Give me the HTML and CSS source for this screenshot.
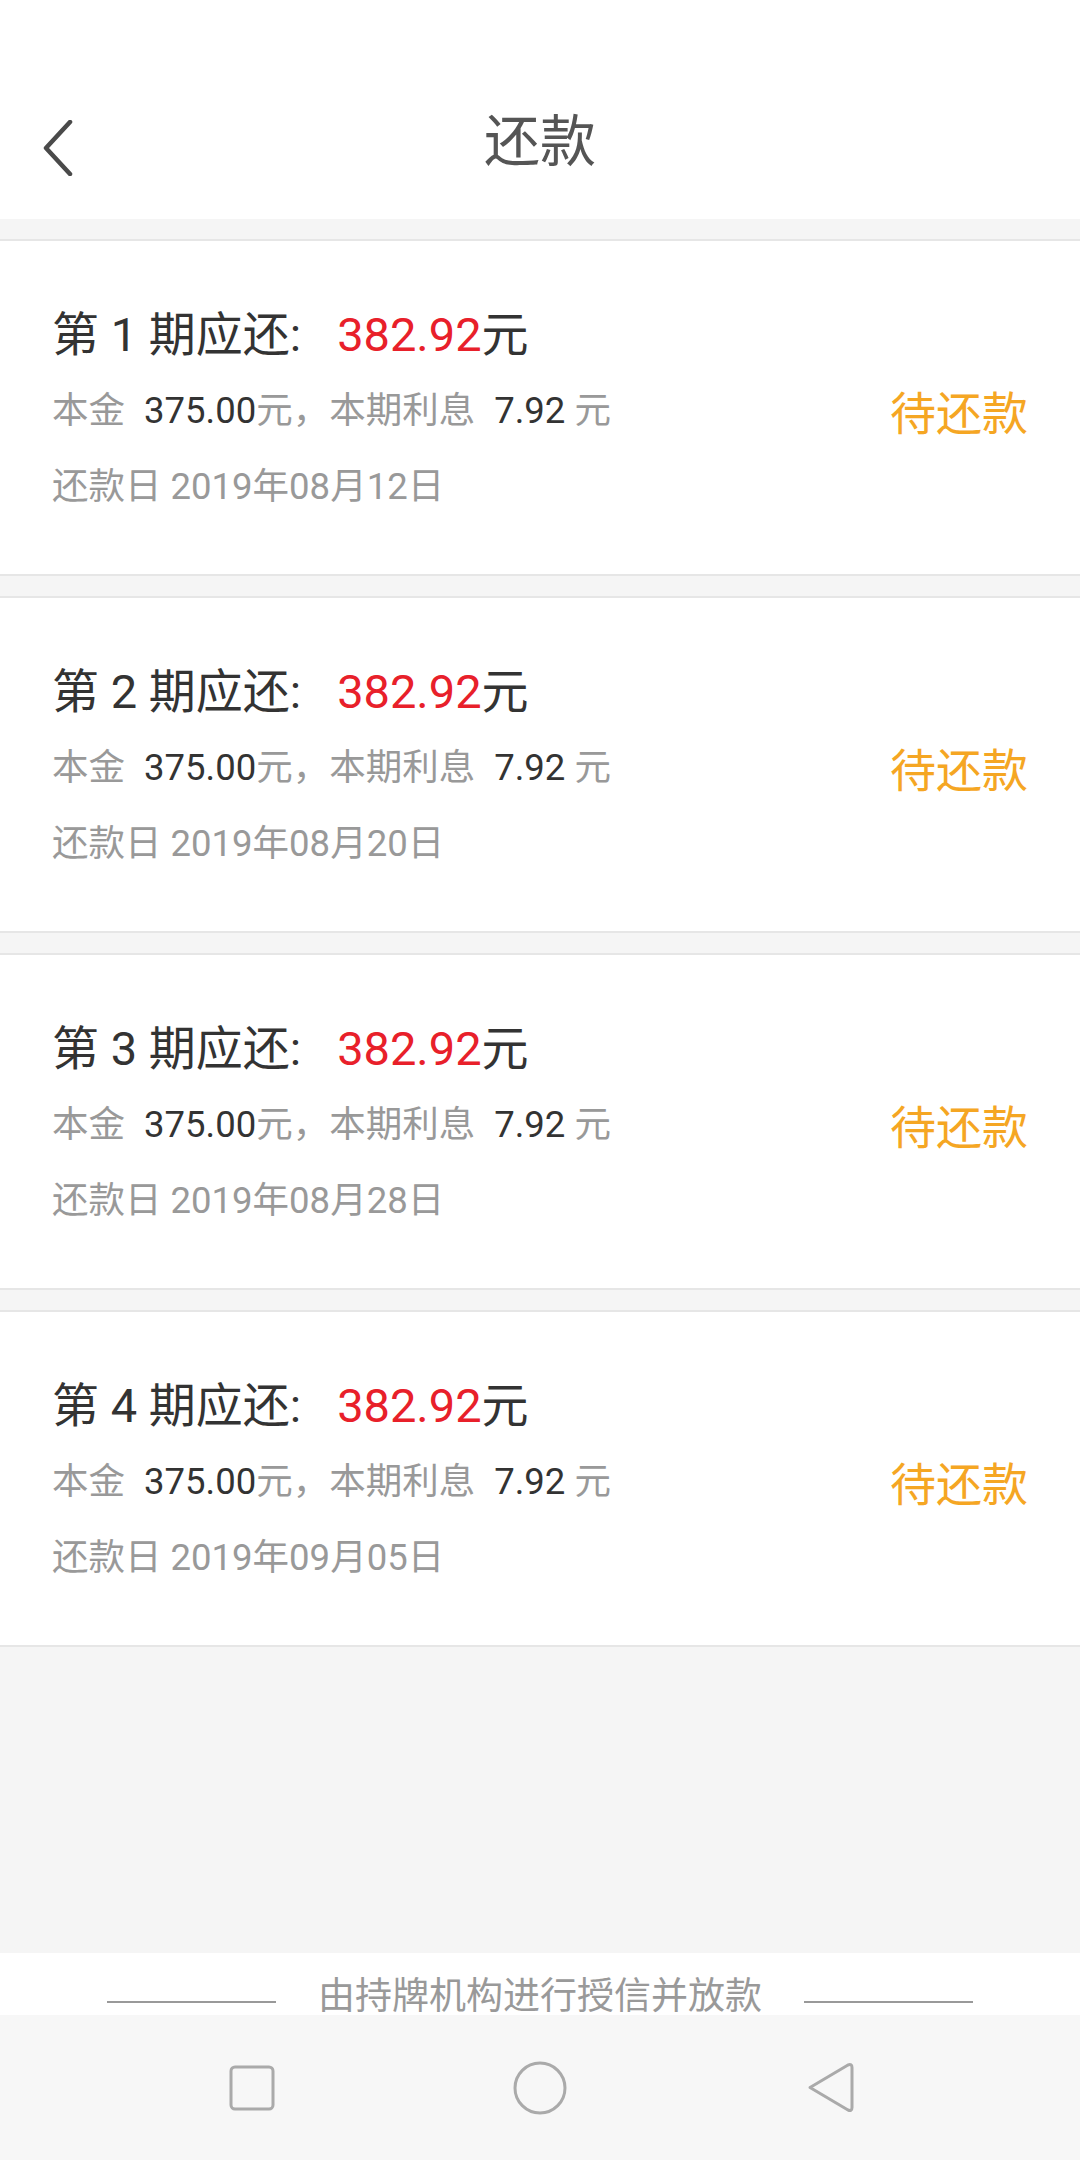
FILE: index.html
```html
<!DOCTYPE html>
<html lang="zh-CN">
<head>
    <meta charset="UTF-8" />
    <meta name="viewport" content="width=device-width, initial-scale=1" />
    <title>还款</title>
    <link rel="stylesheet" href="styles.css">
</head>
<body>
<div class="page">

    <div class="header">
        <svg class="back" width="32" height="56" viewBox="0 0 32 56">
            <polyline points="28,2 4,28 28,54" />
        </svg>
        <div class="title">还款</div>
        <div></div>
    </div>

    <div class="list">
        <div class="card">
            <div class="info">
                <div class="due">第 1 期应还:<span class="amount">382.92</span>元</div>
                <div class="detail">本金<span class="num">375.00</span>元，本期利息<span class="num">7.92</span> 元</div>
                <div class="detail">还款日 2019年08月12日</div>
            </div>
            <div class="status">待还款</div>
        </div>
        <div class="card">
            <div class="info">
                <div class="due">第 2 期应还:<span class="amount">382.92</span>元</div>
                <div class="detail">本金<span class="num">375.00</span>元，本期利息<span class="num">7.92</span> 元</div>
                <div class="detail">还款日 2019年08月20日</div>
            </div>
            <div class="status">待还款</div>
        </div>
        <div class="card">
            <div class="info">
                <div class="due">第 3 期应还:<span class="amount">382.92</span>元</div>
                <div class="detail">本金<span class="num">375.00</span>元，本期利息<span class="num">7.92</span> 元</div>
                <div class="detail">还款日 2019年08月28日</div>
            </div>
            <div class="status">待还款</div>
        </div>
        <div class="card">
            <div class="info">
                <div class="due">第 4 期应还:<span class="amount">382.92</span>元</div>
                <div class="detail">本金<span class="num">375.00</span>元，本期利息<span class="num">7.92</span> 元</div>
                <div class="detail">还款日 2019年09月05日</div>
            </div>
            <div class="status">待还款</div>
        </div>
    </div>

    <div class="filler"></div>

    <div class="footer">
        <span class="rule"></span>
        <span class="note">由持牌机构进行授信并放款</span>
        <span class="rule"></span>
    </div>

    <!-- system nav bar -->
    <div class="navbar">
        <svg width="60" height="60" viewBox="0 0 60 60">
            <rect x="9" y="9" width="42" height="42" rx="4" />
        </svg>
        <svg width="60" height="60" viewBox="0 0 60 60">
            <circle cx="30" cy="30" r="25" />
        </svg>
        <svg width="60" height="60" viewBox="0 0 60 60">
            <path d="M12 29.5 L50 7 Q54 5.5 54 9.5 L54 49.5 Q54 53.5 50 52 Z" />
        </svg>
    </div>

</div>
</body>
</html>
```

FILE: styles.css
```css
body {
    margin: 0;
    background-color: #f5f5f5;
    font-family: Roboto, "Noto Sans CJK SC", sans-serif;
    color: #333;
}
.page {
    height: 2160px;
    display: flex;
    flex-direction: column;
    overflow: hidden;
}
.header {
    background-color: #fff;
    height: 219px;
    padding-top: 64px;
    box-sizing: border-box;
    display: grid;
    grid-template-columns: 1fr auto 1fr;
    align-items: center;
}
.back {
    margin-left: 42px;
    margin-top: 13px;
}
.back polyline {
    fill: none;
    stroke: #4a4a4a;
    stroke-width: 4.5;
    stroke-linecap: round;
    stroke-linejoin: round;
}
.title {
    font-size: 56px;
    line-height: 60px;
    color: #555;
}
.list {
    display: flex;
    flex-direction: column;
    gap: 20px;
    padding-top: 20px;
}
.card {
    background-color: #fff;
    border-top: 2px solid #e6e6e6;
    border-bottom: 2px solid #e6e6e6;
    height: 333px;
    padding: 0 52px;
    display: flex;
    align-items: center;
    justify-content: space-between;
}
.info {
    display: flex;
    flex-direction: column;
    padding-top: 6px;
}
.due {
    font-size: 47px;
    line-height: 77px;
    color: #333;
}
.amount {
    color: #e8202a;
    margin-left: 36px;
}
.detail {
    font-size: 36.5px;
    line-height: 76px;
    color: #999;
}
.num {
    color: #333;
    margin-left: 19px;
}
.status {
    font-size: 46px;
    color: #f5a623;
    margin-top: 4px;
}
.filler {
    flex: 1;
}
.footer {
    background-color: #fff;
    height: 62px;
    padding-top: 25px;
    box-sizing: border-box;
    display: flex;
    justify-content: center;
    align-items: flex-start;
}
.note {
    font-size: 37px;
    line-height: 37px;
    color: #999;
    margin: 0 42px;
}
.rule {
    width: 169px;
    height: 2px;
    background-color: #999;
    margin-top: 23px;
}
.navbar {
    height: 145px;
    flex-shrink: 0;
    background-color: #f7f7f7;
    display: flex;
    justify-content: center;
    align-items: center;
    gap: 228px;
}
.navbar svg * {
    fill: none;
    stroke: #aaa;
    stroke-width: 3;
    stroke-linejoin: round;
}
```
